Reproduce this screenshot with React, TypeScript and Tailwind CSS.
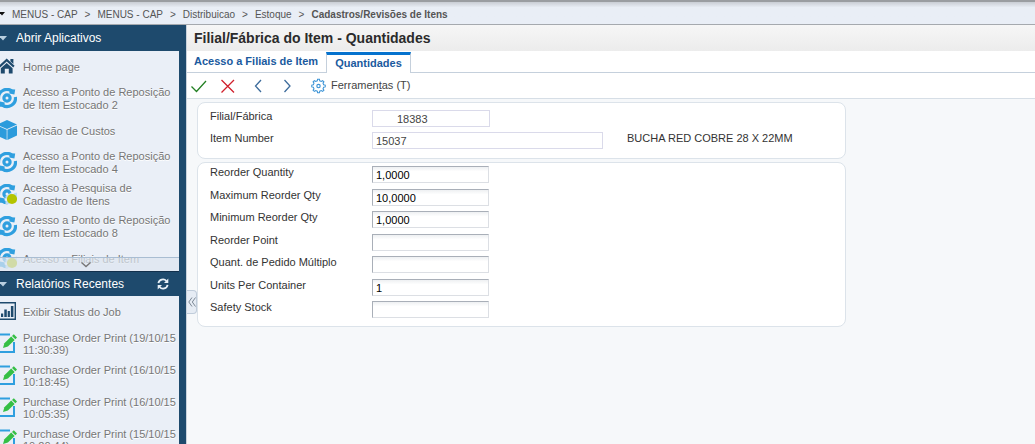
import { Fragment, type ReactNode } from "react";

type IconName = "home" | "sync" | "cube" | "syncDot" | "chart" | "edit";

const crumbs = ["MENUS - CAP", "MENUS - CAP", "Distribuicao", "Estoque"];

const apps: { icon: IconName; label: string }[] = [
  { icon: "home", label: "Home page" },
  { icon: "sync", label: "Acesso a Ponto de Reposição de Item Estocado 2" },
  { icon: "cube", label: "Revisão de Custos" },
  { icon: "sync", label: "Acesso a Ponto de Reposição de Item Estocado 4" },
  { icon: "syncDot", label: "Acesso à Pesquisa de Cadastro de Itens" },
  { icon: "sync", label: "Acesso a Ponto de Reposição de Item Estocado 8" },
  { icon: "syncDot", label: "Acesso a Filiais de Item" },
];

const reports: { icon: IconName; label: string }[] = [
  { icon: "chart", label: "Exibir Status do Job" },
  { icon: "edit", label: "Purchase Order Print (19/10/15 11:30:39)" },
  { icon: "edit", label: "Purchase Order Print (16/10/15 10:18:45)" },
  { icon: "edit", label: "Purchase Order Print (16/10/15 10:05:35)" },
  { icon: "edit", label: "Purchase Order Print (15/10/15 10:20:44)" },
];

const quantities = [
  { id: "reorder-qty", label: "Reorder Quantity", value: "1,0000" },
  { id: "max-qty", label: "Maximum Reorder Qty", value: "10,0000" },
  { id: "min-qty", label: "Minimum Reorder Qty", value: "1,0000" },
  { id: "reorder-point", label: "Reorder Point", value: "" },
  { id: "multiple", label: "Quant. de Pedido Múltiplo", value: "" },
  { id: "container", label: "Units Per Container", value: "1" },
  { id: "safety", label: "Safety Stock", value: "" },
];

function SyncShape() {
  return (
    <g fill="none" stroke="#2f9fdf">
      <circle cx="10" cy="10" r="3.1" strokeWidth="3.2" />
      <path d="M1.6 11A8.4 8.4 0 0 1 14.6 2.9" strokeWidth="3.2" />
      <path d="M18.4 9A8.4 8.4 0 0 1 5.4 17.1" strokeWidth="3.2" />
      <path d="M13 1.2L18.2 1.4L17.4 6.6L12.2 5.6Z" fill="#2f9fdf" stroke="none" />
      <path d="M7 18.8L1.8 18.6L2.6 13.4L7.8 14.4Z" fill="#2f9fdf" stroke="none" />
    </g>
  );
}

function ItemIcon({ name }: { name: IconName }) {
  return (
    <svg width="17" height="22" viewBox="3 0 17 22" className="shrink-0" aria-hidden="true">
      {name === "home" && (
        <g fill="#1e4a6d">
          <path d="M9.7 2.6 L17.6 9.8 L16.2 11.6 L9.7 5.6 L3.2 11.6 L1.8 9.8Z" />
          <path d="M13.4 3h3v5l-3-2.7z" />
          <path d="M9.7 7 L15.6 12.3V17.4H11.8V12.8H7.8v4.6H3.8V12.3Z" />
        </g>
      )}
      {(name === "sync" || name === "syncDot") && <SyncShape />}
      {name === "syncDot" && (
        <>
          <path d="M20 8.2H14.5L8.5 12V20H20Z" fill="#eaeff7" opacity="0.75" />
          <circle cx="15" cy="15" r="5.1" fill="#b4c400" />
        </>
      )}
      {name === "cube" && (
        <>
          <path d="M10 0 L20 4.6 L10 9 L0 4.6Z" fill="#2b9bdc" />
          <path d="M0 5.5 L9.7 9.8V20 L0 15.6Z" fill="#2b9bdc" />
          <path d="M20 5.5 L10.4 9.8V20 L20 15.6Z" fill="#2b9bdc" />
        </>
      )}
      {name === "chart" && (
        <>
          <rect x="0" y="1" width="19" height="18" fill="#1e4a6d" />
          <rect x="1" y="2.5" width="16.6" height="15" fill="#eaeff7" />
          <path d="M4 12.5h2.2V16H4zM7.3 8.5h2.5V16H7.3zM10.7 10h2.2v6h-2.2zM13.9 5h2.5v11h-2.5z" fill="#1e4a6d" />
        </>
      )}
      {name === "edit" && (
        <>
          <path d="M13 1.4H1V18.9H17V9" fill="none" stroke="#2f9fdf" strokeWidth="2" />
          <path d="M6 15 L7.4 10.2 L14.2 3.6 L17.6 7 L10.9 13.5Z" fill="#35bf45" />
          <path d="M15 2.9 L16.8 1.2 L20 4.5 L18.4 6.2Z" fill="#35bf45" />
        </>
      )}
    </svg>
  );
}

function NavList({ items, leading }: { items: { icon: IconName; label: string }[]; leading: string }) {
  return (
    <ul>
      {items.map((item, i) => (
        <li key={i}>
          <a href="#" className={`flex h-8 items-center gap-1.5 text-[11px] text-[#767676] ${leading}`}>
            <ItemIcon name={item.icon} />
            <span className="[text-shadow:0_1px_0_#fff]">{item.label}</span>
          </a>
        </li>
      ))}
    </ul>
  );
}

function SectionHead({ title, height, children }: { title: string; height: string; children?: ReactNode }) {
  return (
    <div className={`flex shrink-0 items-center pr-3 text-xs text-white ${height}`}>
      <svg width="7" height="5" viewBox="0 0 7 5" aria-hidden="true">
        <path d="M-1 0H7L3 4.5Z" fill="#b9cfe0" />
      </svg>
      <h2 className="ml-[9px] flex-1">{title}</h2>
      {children}
    </div>
  );
}

function ToolButton({ label, d, color, width }: { label: string; d: string; color: string; width: string }) {
  return (
    <button type="button" aria-label={label} className={`flex h-6 items-center ${width}`}>
      <svg width="16" height="16" viewBox="0 0 16 16" fill="none" stroke={color} strokeWidth="1.3" aria-hidden="true">
        <path d={d} />
      </svg>
    </button>
  );
}

const labelClass = "w-[162px] shrink-0 leading-[13px]";
const readOnlyClass = "h-[17px] min-w-0 border border-[#dadaea] bg-white pr-1 text-[11px] text-[#444]";

export default function App() {
  return (
    <div className="flex h-screen flex-col overflow-hidden bg-[#f6f8fa] font-['Liberation_Sans',Arial,sans-serif] text-[11px] text-[#333]">
      <nav
        aria-label="Breadcrumb"
        className="flex h-[25px] shrink-0 items-center border-t-2 border-b border-t-[#9a9da1] border-b-[#a5a9ae] bg-linear-to-b from-[#c9cdd4] from-0% via-[#e9eef6] via-25% to-[#e9eef6] pt-0.5 text-[10px] text-[#555]"
      >
        <svg width="6" height="4" viewBox="0 0 6 4" className="mr-1.5" aria-hidden="true">
          <path d="M-1 0H5L2 3.5Z" fill="#111" />
        </svg>
        {crumbs.map((c, i) => (
          <Fragment key={i}>
            <a href="#">{c}</a>
            <span className="mx-[7px]">&gt;</span>
          </Fragment>
        ))}
        <b>Cadastros/Revisões de Itens</b>
      </nav>

      <div className="flex min-h-0 flex-1">
        <aside className="flex w-[186px] shrink-0 flex-col overflow-hidden bg-[#1e4a6d]">
          <SectionHead title="Abrir Aplicativos" height="h-[26px]" />
          <div className="relative mr-[7px] h-[221px] shrink-0 overflow-hidden border-b border-[#12304c] bg-[#eaeff7]">
            <NavList items={apps} leading="leading-[13px]" />
            <button
              type="button"
              aria-label="Mostrar mais"
              className="absolute inset-x-0 bottom-0 flex h-[14px] items-center justify-center border-t border-[#a9bdd2] bg-[#dde6f0]/70"
            >
              <svg width="10" height="6" viewBox="0 0 10 6" fill="none" stroke="#777" strokeWidth="1.4" className="-ml-2" aria-hidden="true">
                <path d="M0.5 0.5L5 4.5L9.5 0.5" />
              </svg>
            </button>
          </div>
          <SectionHead title="Relatórios Recentes" height="h-6">
            <button type="button" aria-label="Atualizar" className="mr-[5px]">
              <svg width="12" height="12" viewBox="0 0 12 12" fill="none" stroke="#e8f0f7" strokeWidth="1.8" aria-hidden="true">
                <path d="M1.4 5.2A4.6 4.6 0 0 1 9.4 3" />
                <path d="M10.6 6.8A4.6 4.6 0 0 1 2.6 9" />
                <path d="M11.3 0.6V5H7ZM0.7 11.4V7H5Z" fill="#e8f0f7" stroke="none" />
              </svg>
            </button>
          </SectionHead>
          <div className="mr-[7px] flex-1 overflow-hidden bg-[#eaeff7]">
            <NavList items={reports} leading="leading-3" />
          </div>
        </aside>

        <main className="relative min-w-0 flex-1 border-l border-[#c9d2dc]">
          <h1 className="flex h-[26px] items-center bg-linear-to-b from-[#f6f6f6] to-[#ececec] pb-px pl-[7px] text-sm font-bold text-[#2b2b2b]">
            Filial/Fábrica do Item - Quantidades
          </h1>
          <div className="flex h-[22px] items-end border-b border-[#c5d0dc] bg-white pl-[7px] font-bold text-[#1a5a9e]">
            <a href="#" className="mr-2 self-center leading-[13px]">Acesso a Filiais de Item</a>
            <a href="#" className="-mb-px flex h-[21px] items-center border-x border-t-3 border-[#c5d0dc] border-t-[#0572ce] bg-white px-2 pb-0.5">
              Quantidades
            </a>
          </div>
          <div className="flex h-[26px] items-center border-b border-[#d6dee6] bg-white pl-1">
            <ToolButton label="OK" color="#238023" width="w-[29px]" d="M0.5 8.5L5.5 13.5L15 3" />
            <ToolButton label="Cancelar" color="#d0202c" width="w-[29px]" d="M1.5 2L14 14.5M14 2L1.5 14.5" />
            <ToolButton label="Anterior" color="#3d6c9c" width="w-[29px]" d="M12 2L6.5 8L12 14" />
            <ToolButton label="Próximo" color="#3d6c9c" width="w-[33px]" d="M6.5 2L12 8L6.5 14" />
            <button type="button" className="flex items-center gap-[5px] text-[#444]">
              <svg width="15" height="16" viewBox="0 0 16 16" fill="none" stroke="#3a93d6" aria-hidden="true">
                <path
                  strokeWidth="1.1"
                  d="M6.7 2.5L7 0.8H9L9.3 2.5L11 3.2L12.4 2.2L13.8 3.6L12.8 5L13.5 6.7L15.2 7V9L13.5 9.3L12.8 11L13.8 12.4L12.4 13.8L11 12.8L9.3 13.5L9 15.2H7L6.7 13.5L5 12.8L3.6 13.8L2.2 12.4L3.2 11L2.5 9.3L0.8 9V7L2.5 6.7L3.2 5L2.2 3.6L3.6 2.2L5 3.2Z"
                />
                <circle cx="8" cy="8" r="1.8" strokeWidth="1.2" />
              </svg>
              <span className="leading-[15px]">
                Ferramen<u>t</u>as (T)
              </span>
            </button>
          </div>

          <form className="flex max-w-[659px] flex-col gap-[3px] pt-[3px] pl-2.5">
            <section className="flex flex-col gap-[5px] rounded-lg border border-[#dce3ea] bg-white px-3 pt-[7px] pb-[9px]">
              <div className="flex">
                <label htmlFor="branch" className={labelClass}>Filial/Fábrica</label>
                <input id="branch" readOnly defaultValue="18383" className={`${readOnlyClass} w-[118px] pl-6`} />
              </div>
              <div className="flex">
                <label htmlFor="item" className={labelClass}>Item Number</label>
                <input id="item" readOnly defaultValue="15037" className={`${readOnlyClass} w-[231px] pl-[3px]`} />
                <span className="ml-6 leading-[13px] whitespace-nowrap">BUCHA RED COBRE 28 X 22MM</span>
              </div>
            </section>
            <section className="rounded-lg border border-[#dce3ea] bg-white px-3 pt-[3px] pb-0.5">
              {quantities.map((q) => (
                <div key={q.id} className="flex odd:h-[23px] even:h-[22px]">
                  <label htmlFor={q.id} className={labelClass}>{q.label}</label>
                  <input
                    id={q.id}
                    defaultValue={q.value}
                    className="h-[17px] w-[117px] min-w-0 border border-[#dcdfe4] border-t-[#a9afb8] border-l-[#a9afb8] bg-linear-to-b from-[#eef0f2] to-white to-30% px-[3px] pt-px text-[11px] text-black"
                  />
                </div>
              ))}
            </section>
          </form>

          <button
            type="button"
            aria-label="Recolher painel"
            className="absolute top-[265px] left-0 flex h-6 w-2.5 items-center justify-center rounded-r-sm border border-l-0 border-[#c0ccda] bg-[#e6ecf4]"
          >
            <svg width="8" height="10" viewBox="0 0 8 10" fill="none" stroke="#7c8794" aria-hidden="true">
              <path d="M4 0.5L0.8 5L4 9.5M7.5 0.5L4.3 5L7.5 9.5" />
            </svg>
          </button>
        </main>
      </div>
    </div>
  );
}
